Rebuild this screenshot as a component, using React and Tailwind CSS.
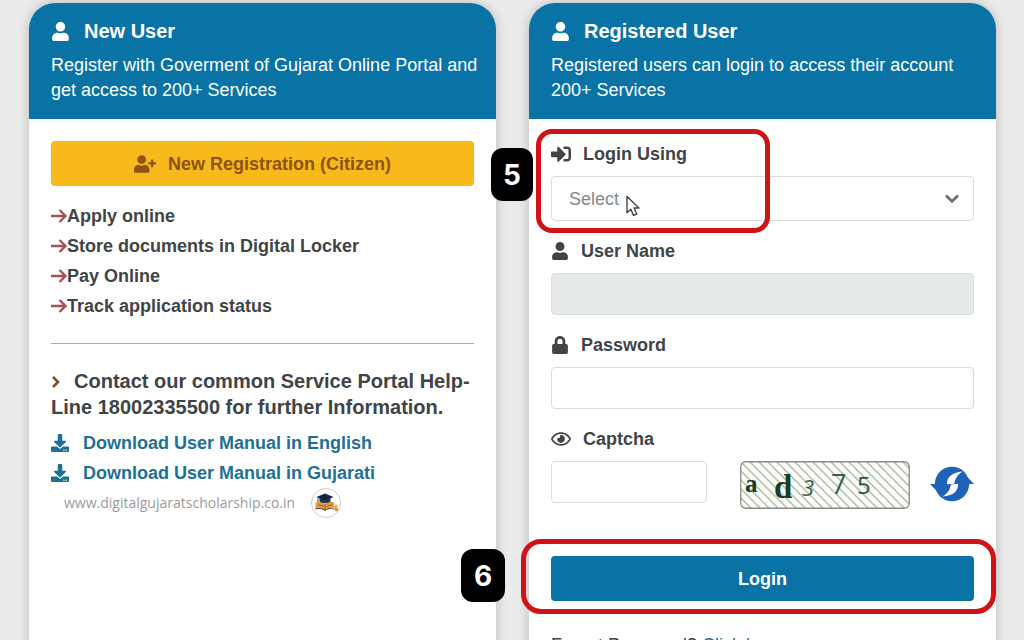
import { useState } from 'react';
import {
  FaUser,
  FaUserPlus,
  FaSignInAlt,
  FaLock,
  FaRegEye,
  FaDownload,
} from 'react-icons/fa';

const services = [
  'Apply online',
  'Store documents in Digital Locker',
  'Pay Online',
  'Track application status',
];

const manuals = ['Download User Manual in English', 'Download User Manual in Gujarati'];

const ArrowIcon = () => (
  <svg viewBox="0 0 16 16" className="w-4 h-4 shrink-0" fill="none" stroke="#a8505a" strokeWidth="2.3">
    <path d="M0 8h14M8.500 2l6 6-6 6" />
  </svg>
);

const AngleIcon = () => (
  <svg viewBox="0 0 10 12" className="inline-block w-[10px] h-3 mr-[13px] align-baseline" fill="none" stroke="#8a4b2a" strokeWidth="2.6">
    <path d="M2 1l5 5-5 5" />
  </svg>
);

const ChevronIcon = () => (
  <svg
    viewBox="0 0 16 10"
    className="absolute right-[14px] top-[18px] w-4 h-[10px] pointer-events-none"
    fill="none"
    stroke="#6a6d70"
    strokeWidth="2.6"
  >
    <path d="M2 1.500l6 6 6-6" />
  </svg>
);

const PointerIcon = () => (
  <svg viewBox="0 0 14 22" className="absolute left-[75px] top-[19px] w-[14px] h-[22px] pointer-events-none">
    <path
      d="M1 1.500v16.200l3.800-3.500 2.700 6.200 3.200-1.400-2.700-6H13z"
      fill="#fff"
      stroke="#444"
      strokeWidth="1.4"
      strokeLinejoin="round"
    />
  </svg>
);

const CapLogo = () => (
  <svg viewBox="0 0 30 30" className="w-[30px] h-[30px] shrink-0">
    <circle cx="15" cy="15" r="14.500" fill="#fff" stroke="#b4b9be" strokeWidth="0.7" />
    <path d="M4.500 14.500c3.500-1.500 7.500-.5 9.500 1.500 2-2 5.500-3 9-1.500v6.500c-3-1-7-.5-9 1.500-2-2-6-2.500-9.500-1.500z" fill="#e69a3c" />
    <path d="M14 16v6.500M7 17c2 0 4 .5 5.500 1.500M16 18.500c1.500-1 3-1.500 5-1.500" stroke="#7a5128" strokeWidth="0.8" fill="none" />
    <path d="M4.500 21c3.500-1 7.500-.5 9.500 1.500 2-2 6-2.500 9-1.500" stroke="#39445a" strokeWidth="1" fill="none" />
    <path d="M8.500 9.500v4c3 2.200 8 2.200 11 0v-4z" fill="#1d3a5c" />
    <path d="M14 5.500l8.500 3.500-8.500 3.700L5.500 9z" fill="#15263f" />
    <path d="M7 9.500v4.500" stroke="#15263f" strokeWidth="0.8" />
    <circle cx="22.500" cy="20" r="1.900" fill="#e8a552" />
    <circle cx="25.500" cy="21.500" r="1.900" fill="#dd9440" />
    <circle cx="25" cy="18" r="1.500" fill="#e8a552" />
  </svg>
);

const CaptchaImage = () => (
  <svg viewBox="0 0 170 48" className="w-[170px] h-12 shrink-0" role="img" aria-label="Captcha code">
    <defs>
      <pattern id="hatch" width="9" height="9" patternUnits="userSpaceOnUse">
        <rect width="9" height="9" fill="#f9fcf5" />
        <path d="M-1-1l11 11M-1 8l2 2M8-1l2 2" stroke="#b3b8b0" strokeWidth="1.400" />
      </pattern>
    </defs>
    <rect x="0.75" y="0.75" width="168.500" height="46.500" rx="5" fill="url(#hatch)" stroke="#8b8b8b" strokeWidth="1.300" />
    <g fill="#143d22">
      <text x="5" y="31" fontSize="25" fontWeight="700" fontFamily="Liberation Serif, serif">a</text>
      <text x="34" y="37" fontSize="33" fontWeight="700" fontFamily="Liberation Serif, serif">d</text>
      <text x="62" y="35" fontSize="22" fontStyle="italic" fontFamily="Open Sans, sans-serif" fill="#35604a">3</text>
      <text x="91" y="33" fontSize="27" fontFamily="Open Sans, sans-serif" fill="#35604a">7</text>
      <text x="117" y="33" fontSize="24" fontFamily="Open Sans, sans-serif" fill="#28563c">5</text>
    </g>
  </svg>
);

const RefreshIcon = () => (
  <svg viewBox="0 0 44 36" className="w-11 h-9" fill="#1f63b8">
    <circle cx="22" cy="18" r="17.200" />
    <path d="M0 18h10v10.500zM44 18H34V7.500z" />
    <g fill="#fff">
      <path d="M17 18.300c0-7 4-11.800 15.800-12.800-5 2.800-7.300 6.500-8.600 12.300z" />
      <path d="M28.200 17.700c0 7-4 11.800-15.800 12.800 5-2.800 7.300-6 8.600-12z" />
    </g>
  </svg>
);

const StepBadge = ({ number, className }) => (
  <span
    className={`absolute flex items-center justify-center h-[53px] rounded-xl bg-black text-white text-[28px] font-bold font-[Inter,sans-serif] ${className}`}
  >
    {number}
  </span>
);

const Card = ({ title, description, children }) => (
  <section className="rounded-t-[26px] bg-white shadow-[0_0_12px_rgba(0,0,0,0.22)]">
    <header className="rounded-t-[26px] bg-[#0873a4] text-white pt-3 pb-4 pl-[22px] pr-4">
      <h2 className="flex items-center gap-[14px] text-xl leading-8 font-bold">
        <FaUser className="text-[19px]" />
        {title}
      </h2>
      <p className="mt-[6px] text-lg leading-[25px]">{description}</p>
    </header>
    <div className="px-[22px] pt-[22px] pb-8">{children}</div>
  </section>
);

const FieldLabel = ({ icon: Icon, htmlFor, children }) => (
  <label htmlFor={htmlFor} className="flex items-center gap-3 mb-[10px] text-lg leading-6 font-bold">
    {Icon}
    {children}
  </label>
);

const inputClass = 'block h-[42px] rounded border border-[#d9dbdd] px-4 text-lg outline-none';

const App = () => {
  const [loginType, setLoginType] = useState('');
  const [password, setPassword] = useState('');
  const [captcha, setCaptcha] = useState('');

  return (
    <main className="grid grid-cols-2 gap-[33px] h-screen overflow-hidden bg-[#ebebeb] pt-[3px] pl-[29px] pr-7 font-[Liberation_Sans,Arial,sans-serif] text-[#3f4447]">
      <Card
        title="New User"
        description="Register with Goverment of Gujarat Online Portal and get access to 200+ Services"
      >
        <button
          type="button"
          className="flex items-center justify-center gap-3 w-full h-[45px] rounded bg-[#f8b91d] text-lg font-bold text-[#8d5310]"
        >
          <FaUserPlus className="text-[22px]" />
          New Registration (Citizen)
        </button>
        <ul className="mt-[15px] text-lg leading-[30px] font-bold">
          {services.map((service) => (
            <li key={service} className="flex items-center">
              <ArrowIcon />
              {service}
            </li>
          ))}
        </ul>
        <hr className="mt-[22px] border-t border-[#a9abad]" />
        <p className="mt-6 text-xl leading-[26px] font-bold">
          <AngleIcon />
          Contact our common Service Portal Help-Line 18002335500 for further Information.
        </p>
        <ul className="mt-2 text-lg leading-[30px] font-bold text-[#1f7096]">
          {manuals.map((manual) => (
            <li key={manual}>
              <a href="#manual" className="flex items-center gap-[14px]">
                <FaDownload />
                {manual}
              </a>
            </li>
          ))}
        </ul>
        <div className="flex items-center gap-4 pl-[13px] text-sm text-[#9b9b9b] font-[Open_Sans,sans-serif]">
          www.digitalgujaratscholarship.co.in
          <CapLogo />
        </div>
      </Card>

      <Card
        title="Registered User"
        description="Registered users can login to access their account 200+ Services"
      >
        <form onSubmit={(e) => e.preventDefault()} className="flex flex-col gap-[18px] pt-px">
          <div className="relative">
            <FieldLabel icon={<FaSignInAlt className="text-xl" />} htmlFor="loginType">
              Login Using
            </FieldLabel>
            <div className="relative">
              <select
                id="loginType"
                value={loginType}
                onChange={(e) => setLoginType(e.target.value)}
                className="block w-full h-[45px] appearance-none rounded border border-[#d9dbdd] bg-white px-[17px] text-lg text-[#85888a] outline-none"
              >
                <option value="">Select</option>
                <option value="email">Email</option>
                <option value="mobile">Mobile</option>
              </select>
              <ChevronIcon />
              <PointerIcon />
            </div>
            <span className="absolute -left-[15px] -top-[13px] w-[234px] h-[104px] rounded-2xl border-5 border-[#cf1418] pointer-events-none" />
            <StepBadge number={5} className="-left-[60px] top-[6px] w-[42px]" />
          </div>

          <div>
            <FieldLabel icon={<FaUser />} htmlFor="userName">
              User Name
            </FieldLabel>
            <input id="userName" type="text" disabled className={`${inputClass} w-full bg-[#e6eae9]`} />
          </div>

          <div>
            <FieldLabel icon={<FaLock />} htmlFor="password">
              Password
            </FieldLabel>
            <input
              id="password"
              type="password"
              value={password}
              onChange={(e) => setPassword(e.target.value)}
              className={`${inputClass} w-full`}
            />
          </div>

          <div>
            <FieldLabel icon={<FaRegEye className="text-xl" />} htmlFor="captcha">
              Captcha
            </FieldLabel>
            <div className="flex items-start">
              <input
                id="captcha"
                type="text"
                value={captcha}
                onChange={(e) => setCaptcha(e.target.value)}
                className={`${inputClass} w-[156px] mr-auto`}
              />
              <CaptchaImage />
              <button type="button" aria-label="Refresh captcha" className="ml-5 mt-[5px]">
                <RefreshIcon />
              </button>
            </div>
          </div>

          <div className="relative mt-[29px]">
            <button type="submit" className="block w-full h-[45px] rounded bg-[#0873a4] text-lg font-bold text-white">
              Login
            </button>
            <span className="absolute -left-[30px] -right-[22px] -top-[17px] h-[75px] rounded-[20px] border-5 border-[#cf1418] pointer-events-none" />
            <StepBadge number={6} className="-left-[90px] -top-[7px] w-[44px]" />
          </div>

          <p className="mt-[14px] text-lg leading-6">
            Forgot Password?{' '}
            <a href="#forgot" className="text-[#1f7096]">
              Click here
            </a>
          </p>
        </form>
      </Card>
    </main>
  );
};

export default App;
